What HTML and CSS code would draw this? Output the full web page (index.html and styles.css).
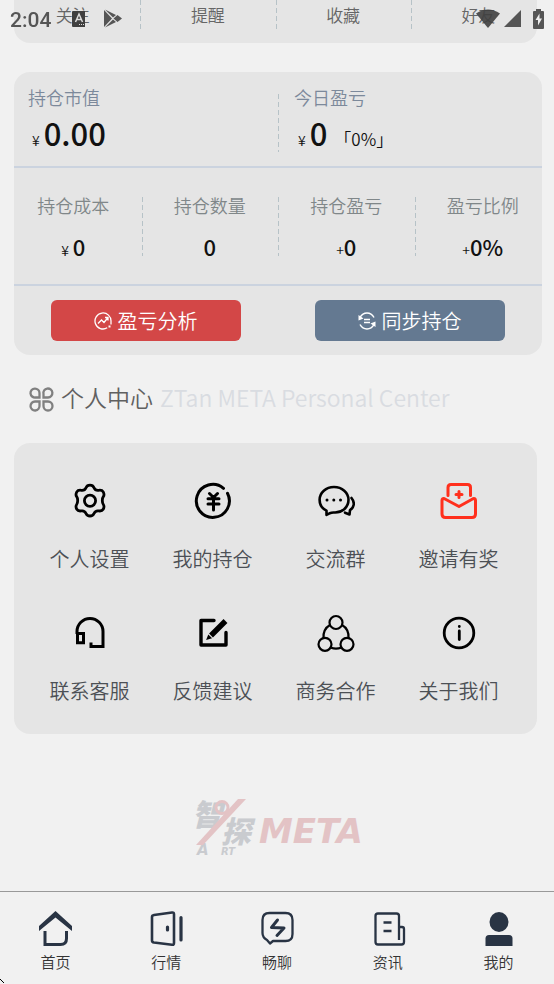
FILE: index.html
```html
<!DOCTYPE html>
<html lang="zh-CN">
<head>
<meta charset="utf-8">
<meta name="viewport" content="width=device-width, initial-scale=1">
<title>个人中心</title>
<link rel="stylesheet" href="styles.css">
</head>
<body>
<div class="status">
  <span class="clock">2:04</span>
  <svg class="status-app" width="14" height="16" viewBox="0 0 14 16"><path fill="#3f3f3f" d="M1 0h12v16H1q-1 0-1-1V1q0-1 1-1z"/><path fill="none" stroke="#ddd" stroke-width="1.5" d="M3.500 11 7 3l3.500 8M5 8.500h4"/><path stroke="#ddd" stroke-width="1" stroke-dasharray="1 1" d="M7 13.500h6"/></svg>
  <svg class="status-play" width="18" height="19" viewBox="0 0 18 19"><path fill="#555" d="M0 1v17l8-8.500zM1 .5l8 8 3-2.500zM1 18.500l8-8 3 2.500zM9.500 9.500l4-3.500L18 9.500 13.500 13z"/></svg>
  <span class="status-space"></span>
  <svg width="24" height="19" viewBox="0 0 24 19"><path fill="#3f3f3f" fill-opacity=".9" d="M0 4.500Q12-3.500 24 4.500L12 19z"/></svg>
  <svg class="status-cell" width="17" height="17" viewBox="0 0 17 17"><path fill="#555" d="M17 0v17H0z"/></svg>
  <svg class="status-battery" width="11" height="20" viewBox="0 0 11 20"><path fill="#555" d="M3 0h5v2h2q1 0 1 1v16q0 1-1 1H1q-1 0-1-1V3q0-1 1-1h2z"/><path fill="#eee" d="M6.500 4.500 2.500 11h2.500v5.500L9 9.500H6.500z"/></svg>
</div>

<main class="page">
  <section class="card shortcuts">
    <div class="quarters">
      <a class="quarter" href="#">关注</a>
      <a class="quarter" href="#">提醒</a>
      <a class="quarter" href="#">收藏</a>
      <a class="quarter" href="#">好友</a>
    </div>
  </section>

  <section class="card holdings">
    <div class="summary">
      <div class="total">
        <div class="total-label">持仓市值</div>
        <div class="total-value"><span class="unit">¥</span><strong>0.00</strong></div>
      </div>
      <div class="total">
        <div class="total-label">今日盈亏</div>
        <div class="total-value"><span class="unit">¥</span><strong>0</strong><span class="ratio">「0%」</span></div>
      </div>
    </div>
    <div class="details">
      <div class="quarters">
        <div class="quarter"><div class="detail-label">持仓成本</div><div class="detail-value"><span class="unit gap">¥</span><strong>0</strong></div></div>
        <div class="quarter"><div class="detail-label">持仓数量</div><div class="detail-value"><strong>0</strong></div></div>
        <div class="quarter"><div class="detail-label">持仓盈亏</div><div class="detail-value"><span class="unit">+</span><strong>0</strong></div></div>
        <div class="quarter"><div class="detail-label">盈亏比例</div><div class="detail-value"><span class="unit">+</span><strong>0%</strong></div></div>
      </div>
    </div>
    <div class="actions">
      <button class="action red" type="button">
        <svg width="18" height="18" viewBox="0 0 18 18" fill="none" stroke="#fff" stroke-width="1.300"><path d="M13.200 15.800A8 8 0 1 1 17 9.500v3"/><path d="m4 11.500 3.500-3.500 2.500 2.500 4-5M11 5.500h3v3"/><path stroke-width="2" d="M14.500 14.500h2"/></svg>
        盈亏分析</button>
      <button class="action blue" type="button">
        <svg width="18" height="18" viewBox="0 0 18 18" fill="none" stroke="#fff" stroke-width="1.500"><path d="M2 5.500Q4.500 1 9 1t7 4.500M16 12.500Q13.500 17 9 17t-7-4.500M6 7.500h6M6 10.500h6"/><path fill="#fff" stroke="none" d="M.5 3v5.500l5-2zM17.500 15V9.500l-5 2z"/></svg>
        同步持仓</button>
    </div>
  </section>

  <h2 class="heading">
    <svg width="25" height="25" viewBox="0 0 25 25" fill="none" stroke="#808080" stroke-width="2.300"><path d="M10.500 10.500H6.500A4.500 4.500 0 1 1 10.500 6zM14.500 10.500V7A4.500 4.500 0 1 1 19 10.500zM10.500 14.500V18.500A4.500 4.500 0 1 1 6 14.500zM14.500 14.500H19A4.500 4.500 0 1 1 14.500 19z"/></svg>
    <span class="heading-main">个人中心</span>
    <span class="heading-sub">ZTan META Personal Center</span>
  </h2>

  <nav class="card menu" aria-label="个人中心">
    <a class="menu-item" href="#">
      <svg width="38" height="38" viewBox="0 0 38 38" fill="none" stroke="#000" stroke-width="2.800" stroke-linejoin="round"><path d="M19 3.200c2 0 3.300.8 4 2.500.8 1.900 2.600 2.900 4.700 2.600 2-.3 3.500-.1 4.500 1.600.9 1.700 1.300 3.200.1 4.800-1.300 1.700-1.300 6.100 0 7.800 1.200 1.600.8 3.100-.1 4.800-1 1.700-2.500 1.900-4.500 1.600-2.100-.3-3.900.7-4.700 2.600-.7 1.700-2 2.500-4 2.500s-3.300-.8-4-2.500c-.8-1.900-2.600-2.900-4.700-2.600-2 .3-3.500.1-4.500-1.600-.9-1.700-1.300-3.200-.1-4.800 1.300-1.700 1.300-6.100 0-7.800-1.200-1.600-.8-3.100.1-4.800 1-1.700 2.500-1.900 4.500-1.600 2.100.3 3.900-.7 4.700-2.600.7-1.700 2-2.500 4-2.500z"/><circle cx="19" cy="18.700" r="5.600"/></svg>
      <span>个人设置</span></a>
    <a class="menu-item" href="#">
      <svg width="38" height="38" viewBox="0 0 38 38" fill="none" stroke="#000" stroke-width="3" stroke-linecap="round"><path d="M29.500 6.300A16.500 16.500 0 1 0 33.500 11.300"/><path d="m15.500 11.500 4 4 4-4M19.500 15.500V28M14 16.700h11M14 22h11"/></svg>
      <span>我的持仓</span></a>
    <a class="menu-item" href="#">
      <svg width="38" height="38" viewBox="0 0 38 38" fill="none" stroke="#000" stroke-width="2.600" stroke-linecap="round" stroke-linejoin="round"><path d="M9.500 28.600C5 26.500 2.600 22.500 2.600 17.800 2.600 10.500 9 5 17 5s14.500 5.500 14.500 12.800c0 7.800-6.700 13.200-14.500 12.700-2.500-.1-3 .2-4.500.9l-3 1.500z"/><path d="M34.500 16c3.800 4.700 2.500 9.500-1.500 12.200l-.5 4.300-4.500-1.800"/><path stroke-width="3" d="M10 18h.01M16.800 18h.01M23.500 18h.01"/></svg>
      <span>交流群</span></a>
    <a class="menu-item" href="#">
      <svg width="38" height="38" viewBox="0 0 38 38" fill="none" stroke="#ff301d" stroke-width="3" stroke-linecap="round" stroke-linejoin="round"><path d="M8 13.500V5.500Q8 2.500 11 2.500H27.500Q30.500 2.500 30.500 5.500V13.500M19 9.500v6M16 12.500h6"/><path d="M19 24.500 4.500 16.800Q2 16 2 18.500V32Q2 35.500 5.500 35.500H32Q35.500 35.500 35.500 32V18.500Q35.500 16 33 16.800z"/></svg>
      <span>邀请有奖</span></a>
    <a class="menu-item" href="#">
      <svg width="38" height="38" viewBox="0 0 38 38" fill="none" stroke="#000" stroke-width="3"><path d="M6 20V17.500A13 13 0 0 1 32 17.500V32.500H20V28.500M6.500 19.500H12.500V28.700H6.500z"/></svg>
      <span>联系客服</span></a>
    <a class="menu-item" href="#">
      <svg width="38" height="38" viewBox="0 0 38 38" fill="none" stroke="#000" stroke-width="3.400" stroke-linejoin="round" stroke-linecap="round"><path d="M20 6.500H7V31H32V18.500"/><path stroke-width="5.500" stroke-linecap="butt" d="M17 21.500 31.500 7"/><path fill="#000" stroke="none" d="m14.300 20.500 3.800 3.800-6 1.700z"/></svg>
      <span>反馈建议</span></a>
    <a class="menu-item" href="#">
      <svg width="38" height="38" viewBox="0 0 38 38" fill="none" stroke="#000" stroke-width="2.200"><circle cx="19" cy="8.500" r="6.500"/><circle cx="8" cy="30.300" r="6.500"/><circle cx="30" cy="30.300" r="6.500"/><path d="M13 11Q6 15 6.500 24M25 11Q32 15 31.500 24M14 33.800q5 1.700 10 0"/></svg>
      <span>商务合作</span></a>
    <a class="menu-item" href="#">
      <svg width="38" height="38" viewBox="0 0 38 38" fill="none" stroke="#000" stroke-width="2.800" stroke-linecap="round"><circle cx="19" cy="19" r="14.800"/><path d="M19.300 17V25.500M19.300 12.500h.01"/></svg>
      <span>关于我们</span></a>
  </nav>

  <svg class="logo" width="174" height="66" viewBox="0 0 174 66" role="img" aria-label="智探 ART META">
    <g fill="#c9cbcf"><text class="logo-cjk" x="0" y="33">智</text><text class="logo-cjk" x="29" y="50">探</text><text class="logo-a" x="5" y="62">A</text><text class="logo-rt" x="29" y="62">RT</text></g>
    <path fill="#e3c3c5" d="M46 6h8L11 52H4z"/><circle cx="30" cy="14.500" r="6" fill="none" stroke="#e3c3c5" stroke-width="3"/>
    <text class="logo-meta" x="67" y="50">META</text>
  </svg>
</main>

<nav class="tabs" aria-label="主导航">
  <a class="tab" href="#"><svg width="36" height="36" viewBox="0 0 36 36"><path fill="#293444" d="M18.500 1 35 16v5L18.500 7.500 2 21v-5z"/><path fill="none" stroke="#293444" stroke-width="3" d="M8 21V34.500H23.500Q29.500 34.500 29.500 28.500V21"/></svg>首页</a>
  <a class="tab" href="#"><svg width="36" height="36" viewBox="0 0 36 36" fill="none" stroke="#293444" stroke-width="2.600" stroke-linecap="round" stroke-linejoin="round"><path d="m6 5 18-2.500q2-.3 2 1.700V33q0 2-2 1.700L6 32.500q-2-.3-2-2V7q0-1.700 2-2z"/><path stroke-width="3.200" d="M19.500 17v3M33 7.500v22.500"/></svg>行情</a>
  <a class="tab" href="#"><svg width="36" height="36" viewBox="0 0 36 36" fill="none" stroke="#293444" stroke-width="2.300" stroke-linecap="round" stroke-linejoin="round"><path d="M10.500 3h16q7 0 7 7v14q0 7-7 7H14l-3 2.500-3-3.500Q3.500 27.500 3.500 23V10q0-7 7-7z"/><path stroke-width="3" d="m18.500 10-6 7.500 12.500.5-7 7.500"/></svg>畅聊</a>
  <a class="tab" href="#"><svg width="36" height="36" viewBox="0 0 36 36" fill="none" stroke="#293444" stroke-width="2.300" stroke-linejoin="round"><path d="M29 30V6q0-2.500-2.500-2.500H8Q5.500 3.500 5.500 6V32q0 2.500 2.500 2.500H31.500q2.500 0 2.500-2.500V19q0-2-2-2H29M13.500 12.500h8M13.500 21h8"/></svg>资讯</a>
  <a class="tab" href="#"><svg width="36" height="36" viewBox="0 0 36 36" fill="#293444"><ellipse cx="18" cy="12" rx="9.500" ry="10"/><path d="M8 25h20q3.500 0 3.500 3.500V36h-27V28.500Q4.500 25 8 25z"/></svg>我的</a>
</nav>
<svg class="pointer" width="5" height="5" viewBox="0 0 5 5" aria-hidden="true"><path fill="#000" d="M0 0h1v1H0zM1 1h1v1H1zM2 2h1v1H2zM3 3h1v1H3z"/></svg>
</body>
</html>
```
FILE: styles.css
```css
* {
  box-sizing: border-box;
}

body {
  margin: 0;
  min-height: 100vh;
  display: flex;
  flex-direction: column;
  background: #f1f1f1;
  color: #111;
  font-family: "Noto Sans CJK SC", sans-serif;
  font-weight: 350;
}

a {
  color: inherit;
  text-decoration: none;
}

svg {
  display: block;
  flex: none;
}

.status {
  position: fixed;
  inset: 0 0 auto;
  z-index: 2;
  height: 37px;
  padding: 0 10px;
  display: flex;
  align-items: center;
  color: #555;
}

.clock {
  padding-top: 2px;
  font: 500 21px/24px Roboto, sans-serif;
}

.status-app {
  margin-left: 21px;
}

.status-play {
  margin-left: 18px;
}

.status-space {
  flex: 1;
}

.status-cell {
  margin-left: 4px;
}

.status-battery {
  margin-left: 12px;
}

.page {
  flex: 1;
  padding: 0 12px 0 14px;
}

.card {
  background: #e5e5e5;
  border-radius: 16px;
}

.quarters {
  display: grid;
  grid-template-columns: repeat(4, 1fr);
  margin: 0 -9px;
  text-align: center;
}

.quarter + .quarter,
.total + .total {
  background: repeating-linear-gradient(#b6c2c7 0 5px, transparent 5px 8px) left top / 1px 100% no-repeat;
}

.shortcuts {
  margin-right: 5px;
  padding-bottom: 14px;
  border-radius: 0 0 16px 16px;
  color: #666;
  font-size: 17px;
  line-height: 29px;
}

.holdings {
  margin-top: 29px;
}

.summary {
  display: grid;
  grid-template-columns: 1fr 1fr;
  padding: 22px 0 14px;
  border-bottom: 2px solid #cbd3df;
}

.total {
  height: 58px;
  padding-left: 14px;
}

.total + .total {
  padding-left: 16px;
}

.total-label {
  margin-top: -11px;
  color: #7c899b;
  font-size: 18px;
  line-height: 28px;
}

.total-value {
  padding-left: 4px;
  line-height: 44px;
  white-space: nowrap;
}

.total-value strong {
  margin-left: 4px;
  font-size: 31px;
  font-weight: 500;
}

.unit {
  font-size: 14px;
}

.gap {
  margin-right: 4px;
}

.ratio {
  margin-left: 7px;
  font-size: 17px;
}

.details {
  padding: 29px 0 28px;
  border-bottom: 2px solid #cbd3df;
}

.details .quarter {
  height: 59px;
}

.detail-label {
  margin-top: -6px;
  color: #808789;
  font-size: 18px;
  line-height: 28px;
}

.detail-value {
  margin-top: 11px;
  line-height: 32px;
}

.detail-value strong {
  font-size: 22px;
  font-weight: 500;
}

.actions {
  display: grid;
  grid-template-columns: 1fr 1fr;
  justify-items: center;
  padding: 14px 0;
}

.action {
  width: 72%;
  height: 41px;
  display: flex;
  align-items: center;
  justify-content: center;
  gap: 5px;
  padding: 0;
  border: 0;
  border-radius: 6px;
  color: #fff;
  font: 350 20px/30px "Noto Sans CJK SC", sans-serif;
}

.red {
  background: #d34747;
}

.blue {
  background: #647991;
}

.heading {
  display: flex;
  align-items: center;
  gap: 7px;
  margin: 26px 15px;
  font-size: 23px;
  font-weight: 350;
  line-height: 36px;
}

.heading span {
  margin: -2px 0 2px;
}

.heading-main {
  color: #606060;
}

.heading-sub {
  color: #d9dce1;
}

.menu {
  display: grid;
  grid-template-columns: repeat(4, 1fr);
  row-gap: 40px;
  margin-right: 5px;
  padding: 39px 17px 28px 14px;
}

.menu-item {
  display: flex;
  flex-direction: column;
  align-items: center;
  gap: 24px;
  color: #4c5055;
  font-size: 20px;
  line-height: 30px;
}

.logo {
  margin: 59px auto 0 178px;
}

.logo-cjk {
  font: italic 900 30px "Noto Sans CJK SC", sans-serif;
}

.logo-a,
.logo-rt,
.logo-meta {
  font: italic 700 15px "DejaVu Sans", sans-serif;
}

.logo-rt {
  font-size: 10px;
}

.logo-meta {
  fill: #e3c3c5;
  font-size: 34px;
}

.tabs {
  position: sticky;
  bottom: 0;
  display: grid;
  grid-template-columns: repeat(5, 1fr);
  padding: 18px 0 11px;
  border-top: 1px solid #999;
  background: #f1f1f1;
}

.tab {
  display: flex;
  flex-direction: column;
  align-items: center;
  gap: 4px;
  color: #333;
  font-size: 15px;
  line-height: 23px;
}

.pointer {
  position: fixed;
  left: 0;
  bottom: 0;
}
```
